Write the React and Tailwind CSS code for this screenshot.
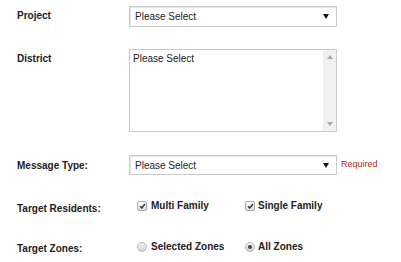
import React from 'react';

function Caret() {
  return (
    <svg width="6" height="5" viewBox="0 0 6 5" className="shrink-0">
      <path d="M0 0H6L3 5Z" fill="#111" />
    </svg>
  );
}

function Select({ className = '' }) {
  return (
    <div className={`w-[208px] border border-[#c9c9c9] bg-white shadow-[inset_1px_1px_0_#e6e6e6] flex items-center justify-between pl-[5px] pr-[7px] ${className}`}>
      <span className="text-[10px] leading-[12px] text-[#222] mt-[1px]">Please Select</span>
      <Caret />
    </div>
  );
}

function Check() {
  return (
    <span className="w-[10px] h-[10px] rounded-[2px] border border-[#a9a9a9] bg-gradient-to-b from-[#fdfdfd] to-[#dcdcdc] flex items-center justify-center shrink-0">
      <svg width="7" height="6" viewBox="0 0 7 6">
        <path d="M1 3.2L2.8 5L6 1" fill="none" stroke="#333" strokeWidth="1.4" />
      </svg>
    </span>
  );
}

function Radio({ on }) {
  return (
    <span className="w-[10px] h-[10px] rounded-full border border-[#b5b5b5] bg-gradient-to-b from-[#f4f4f4] to-[#d4d4d4] flex items-center justify-center shrink-0">
      {on && <span className="w-[4px] h-[4px] rounded-full bg-[#444]" />}
    </span>
  );
}

function Label({ children, className = '' }) {
  return (
    <div className={`w-[112px] shrink-0 font-bold text-[10px] leading-[12px] text-[#222] ${className}`}>
      {children}
    </div>
  );
}

export default function App() {
  return (
    <div className="w-[401px] h-[262px] bg-white overflow-hidden pl-[17px] pt-[6px] font-['Liberation_Sans',Arial,sans-serif]">
      <div className="flex items-center h-[21px]">
        <Label className="-mt-[1px]">Project</Label>
        <Select className="h-[21px]" />
      </div>

      <div className="flex items-start mt-[22px]">
        <Label className="pt-[4px]">District</Label>
        <div className="w-[208px] h-[83px] border border-[#c9c9c9] bg-white flex">
          <div className="flex-1 pl-[3px] pt-[3px] text-[10px] leading-[12px] text-[#222]">Please Select</div>
          <div className="w-[13px] bg-[#f1f1f1] flex flex-col items-center justify-between py-[5px]">
            <svg width="6" height="4" viewBox="0 0 6 4"><path d="M0 4H6L3 0Z" fill="#a8a8a8" /></svg>
            <svg width="6" height="4" viewBox="0 0 6 4"><path d="M0 0H6L3 4Z" fill="#a8a8a8" /></svg>
          </div>
        </div>
      </div>

      <div className="flex items-center mt-[23px] h-[20px]">
        <Label className="mt-[1px]">Message Type:</Label>
        <Select className="h-[20px]" />
        <span className="ml-[4px] text-[9px] leading-[12px] text-[#a52a2a] -mt-[3px]">Required</span>
      </div>

      <div className="flex items-start mt-[25px]">
        <Label className="pt-[3px]">Target Residents:</Label>
        <div className="flex pl-[8px]">
          <div className="w-[108px] flex items-center gap-[4px]">
            <Check />
            <span className="font-bold text-[10px] leading-[12px] text-[#222]">Multi Family</span>
          </div>
          <div className="flex items-center gap-[3px]">
            <Check />
            <span className="font-bold text-[10px] leading-[12px] text-[#222]">Single Family</span>
          </div>
        </div>
      </div>

      <div className="flex items-start mt-[26px]">
        <Label className="pt-[2px]">Target Zones:</Label>
        <div className="flex pl-[8px]">
          <div className="w-[108px] flex items-center gap-[4px]">
            <Radio />
            <span className="font-bold text-[10px] leading-[12px] text-[#222]">Selected Zones</span>
          </div>
          <div className="flex items-center gap-[3px]">
            <Radio on />
            <span className="font-bold text-[10px] leading-[12px] text-[#222]">All Zones</span>
          </div>
        </div>
      </div>
    </div>
  );
}
